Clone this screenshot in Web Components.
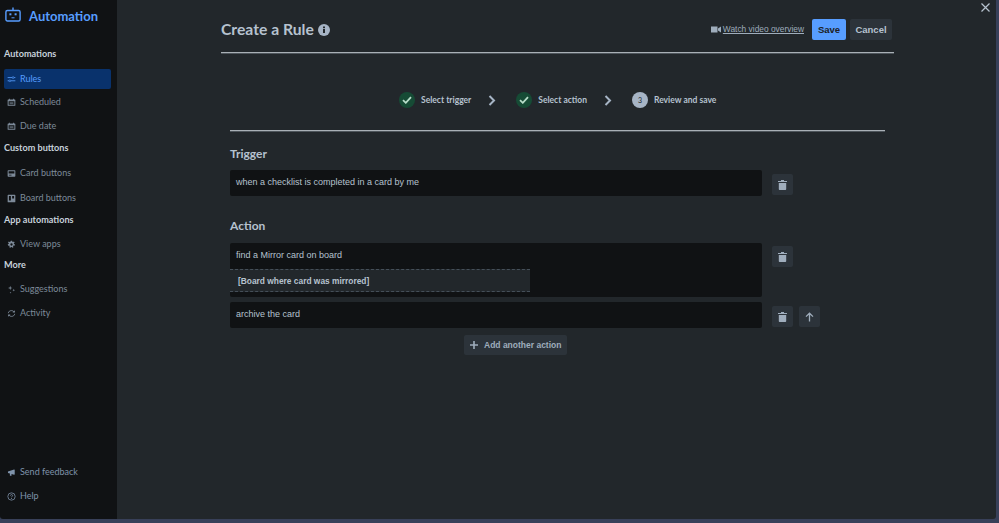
<!DOCTYPE html>
<html lang="en">
<head>
<meta charset="utf-8">
<title>Automation</title>
<style>
  html, body { margin: 0; height: 100%; background: #384059; overflow: hidden; }
</style>
</head>
<body>
<automation-app></automation-app>
<script>
const icons = {
  rules: '<path d="M1 4h7M11 4h2M1 9h2M6 9h7" stroke="currentColor" stroke-width="1.3" fill="none"/><circle cx="9.5" cy="4" r="1.4" fill="none" stroke="currentColor"/><circle cx="4.5" cy="9" r="1.4" fill="none" stroke="currentColor"/>',
  calendar: '<path fill="currentColor" fill-rule="evenodd" d="M3 1h1.500v1.200h5V1H11v1.200h1.200c.5 0 .8.400.8.800v8.200c0 .5-.3.8-.8.8H1.800c-.5 0-.8-.3-.8-.8V3c0-.4.300-.8.800-.8H3zM2.500 5v5.500h9V5z"/><path fill="currentColor" opacity=".6" d="M4 6.500h6v3H4z"/>',
  card: '<path fill="currentColor" fill-rule="evenodd" d="M2 2h10c.6 0 1 .4 1 1v8c0 .6-.4 1-1 1H2c-.6 0-1-.4-1-1V3c0-.6.4-1 1-1zm.5 1.500v3.500h9V3.500zM3 9v1h4V9z"/>',
  board: '<path fill="currentColor" fill-rule="evenodd" d="M2 1h10c.6 0 1 .4 1 1v10c0 .6-.4 1-1 1H2c-.6 0-1-.4-1-1V2c0-.6.4-1 1-1zm1 2v7h3V3zm5 0v4h3V3z"/>',
  gear: '<path fill="currentColor" fill-rule="evenodd" d="M6 1h2l.3 1.600 1.100.5L10.800 2.200l1.100 1.700-1.200 1 .1 1.200 1.500.7-.5 2-1.700-.1-.7 1 .6 1.500-1.800 1-1-1.300H6.300l-1 1.300-1.800-1 .6-1.500-.7-1-1.700.1-.5-2 1.500-.7.1-1.200-1.200-1 1.100-1.700 1.400.9 1.100-.5zM7 5.200a1.800 1.800 0 1 0 0 3.600 1.800 1.800 0 0 0 0-3.600z"/>',
  sparkle: '<path fill="currentColor" d="M5 1l.8 2.700L8.500 4.500 5.800 5.300 5 8 4.200 5.300 1.500 4.500l2.700-.8zM10.500 6l.5 1.500 1.500.5-1.500.5-.5 1.500-.5-1.500L8.500 8l1.500-.5zM5.500 10.500l.4 1 1 .4-1 .4-.4 1-.4-1-1-.4 1-.4z"/>',
  activity: '<path fill="none" stroke="currentColor" stroke-width="1.400" d="M2 6.500C2.300 4 4.300 2.500 7 2.500c1.500 0 2.800.6 3.800 1.800M12 7.500c-.3 2.500-2.300 4-5 4-1.500 0-2.800-.6-3.800-1.800"/><path fill="currentColor" d="M12.300 1.800v3.700H8.600zM1.700 12.200V8.500h3.700z"/>',
  feedback: '<path fill="currentColor" d="M1.500 5.500 11 2.500c.6-.2 1 .2 1 .7v6.600c0 .5-.4.9-1 .7L7 9.300V12H4.500V8.500l-3-.8z"/>',
  help: '<circle cx="7" cy="7" r="5.700" fill="none" stroke="currentColor" stroke-width="1.200"/><path d="M5.300 5.600C5.400 4.600 6.100 4 7 4c1 0 1.700.6 1.700 1.500 0 1.300-1.700 1.300-1.700 2.700" fill="none" stroke="currentColor" stroke-width="1.200"/><circle cx="7" cy="10" r=".8" fill="currentColor"/>'
}

class NavItem extends HTMLElement {
  constructor() {
    super()
    this.attachShadow({ mode: 'open' })
    this.shadowRoot.innerHTML = `
      <style>
        :host {
          display: flex;
          align-items: center;
          gap: 4px;
          height: 20px;
          margin-left: 4px;
          width: 107px;
          padding-left: 3px;
          box-sizing: border-box;
          color: #7d8a99;
          font: 400 9px/20px Lato, sans-serif;
          border-radius: 2px;
        }
        :host([active]) { background: #09326c; color: #579dff; }
        :host([tint]) { color: #7f93ab; }
        svg { width: 9px; height: 9px; flex: none; }
      </style>
      <svg viewBox="0 0 14 14"></svg><slot></slot>
    `
  }

  connectedCallback() {
    this.shadowRoot.querySelector('svg').innerHTML = icons[this.getAttribute('icon')] || ''
  }
}
customElements.define('nav-item', NavItem)

class NavSidebar extends HTMLElement {
  constructor() {
    super()
    this.attachShadow({ mode: 'open' })
    this.shadowRoot.innerHTML = `
      <style>
        :host {
          display: flex;
          flex-direction: column;
          width: 117px;
          flex: none;
          background: #101214;
          border-bottom-left-radius: 3px;
        }
        .brand {
          display: flex;
          align-items: center;
          gap: 8px;
          height: 32px;
          padding-left: 5px;
          color: #579dff;
          font: 700 13px/32px Lato, sans-serif;
        }
        .brand svg { width: 16px; height: 15px; margin-top: -3px; }
        h3 {
          margin: 0;
          padding-left: 4px;
          color: #c7d1db;
          font: 700 9.100px/14px Lato, sans-serif;
        }
        .foot { margin-top: auto; padding-bottom: 13px; }
      </style>
      <div class="brand">
        <svg viewBox="0 0 16 15"><rect x=".9" y="3.500" width="14.200" height="10.500" rx="1.500" fill="none" stroke="currentColor" stroke-width="1.400"/><path stroke="currentColor" stroke-width="1.400" d="M8 .5v3"/><rect x="4.400" y="6.300" width="2" height="2" fill="currentColor"/><rect x="9.600" y="6.300" width="2" height="2" fill="currentColor"/><path stroke="currentColor" d="M6.500 10.800h3"/></svg>
        Automation
      </div>
      <h3 style="margin-top:15px">Automations</h3>
      <nav-item icon="rules" active style="margin-top:8px">Rules</nav-item>
      <nav-item icon="calendar" style="margin-top:3px">Scheduled</nav-item>
      <nav-item icon="calendar" style="margin-top:4px">Due date</nav-item>
      <h3 style="margin-top:5px">Custom buttons</h3>
      <nav-item icon="card" style="margin-top:8px">Card buttons</nav-item>
      <nav-item icon="board" style="margin-top:5px">Board buttons</nav-item>
      <h3 style="margin-top:5px">App automations</h3>
      <nav-item icon="gear" style="margin-top:7px">View apps</nav-item>
      <h3 style="margin-top:4px">More</h3>
      <nav-item icon="sparkle" style="margin-top:7px">Suggestions</nav-item>
      <nav-item icon="activity" style="margin-top:4px">Activity</nav-item>
      <div class="foot">
        <nav-item icon="feedback" tint>Send feedback</nav-item>
        <nav-item icon="help" tint style="margin-top:4px">Help</nav-item>
      </div>
    `
  }
}
customElements.define('nav-sidebar', NavSidebar)

class IconButton extends HTMLElement {
  constructor() {
    super()
    this.attachShadow({ mode: 'open' })
    const up = this.getAttribute('kind') === 'up'
    this.shadowRoot.innerHTML = `
      <style>
        :host {
          display: flex;
          align-items: center;
          justify-content: center;
          width: 21px;
          height: 21px;
          flex: none;
          background: #2c333a;
          border-radius: 2px;
          color: #9fadbc;
        }
        svg { width: 9px; height: 10px; }
      </style>
      ${up
        ? '<svg viewBox="0 0 9 10"><path fill="none" stroke="currentColor" stroke-width="1.300" d="M1 4.600 4.500 1.200 8 4.600M4.500 1.500V9.500"/></svg>'
        : '<svg viewBox="0 0 9 10"><path fill="currentColor" d="M3 0h3v1h3v1H0V1h3zM.8 3h7.400v6c0 .6-.4 1-1 1H1.800c-.6 0-1-.4-1-1z"/></svg>'}
    `
  }
}
customElements.define('icon-button', IconButton)

class RuleRow extends HTMLElement {
  constructor() {
    super()
    this.attachShadow({ mode: 'open' })
    this.shadowRoot.innerHTML = `
      <style>
        :host {
          display: flex;
          align-items: flex-start;
          gap: 10px;
        }
        .box {
          width: 532px;
          flex: none;
          box-sizing: border-box;
          background: #101214;
          border-radius: 2px;
          color: #b6c2cf;
          font: 400 9px/25px "Liberation Sans", Arial, sans-serif;
          padding-left: 6px;
          min-height: 26px;
        }
        .tools { display: flex; gap: 6px; margin-top: var(--tools-top, 4px); }
      </style>
      <div class="box"><slot></slot></div>
      <div class="tools"><slot name="tools"></slot></div>
    `
  }
}
customElements.define('rule-row', RuleRow)

class StepItem extends HTMLElement {
  constructor() {
    super()
    this.attachShadow({ mode: 'open' })
    const n = this.getAttribute('number')
    this.shadowRoot.innerHTML = `
      <style>
        :host {
          display: flex;
          align-items: center;
          gap: 6px;
          color: #b6c2cf;
          font: 700 8.500px/16px Lato, sans-serif;
        }
        .dot {
          width: 16px;
          height: 16px;
          border-radius: 50%;
          background: ${n ? '#a6b4c5' : '#164b35'};
          color: #22272b;
          display: flex;
          align-items: center;
          justify-content: center;
          font: 400 7px/16px Lato, sans-serif;
        }
        svg { width: 10px; height: 8px; }
      </style>
      <span class="dot">${n || '<svg viewBox="0 0 10 8"><path fill="none" stroke="#b6dcc8" stroke-width="1.800" d="M1 4.200 3.800 6.800 9 1.200"/></svg>'}</span>
      <slot></slot>
    `
  }
}
customElements.define('step-item', StepItem)

class StepChevron extends HTMLElement {
  constructor() {
    super()
    this.attachShadow({ mode: 'open' })
    this.shadowRoot.innerHTML = `
      <style>
        :host { display: flex; color: #a6b4c5; }
        svg { width: 8px; height: 11px; }
      </style>
      <svg viewBox="0 0 8 11"><path fill="none" stroke="currentColor" stroke-width="2" d="M1.500 1 6 5.500 1.500 10"/></svg>
    `
  }
}
customElements.define('step-chevron', StepChevron)

class RuleEditor extends HTMLElement {
  constructor() {
    super()
    this.attachShadow({ mode: 'open' })
    this.shadowRoot.innerHTML = `
      <style>
        :host {
          display: flex;
          flex-direction: column;
          flex: 1;
          min-width: 0;
          position: relative;
          background: #22272b;
          border-bottom-right-radius: 3px;
          padding: 0 104px;
          font-family: Lato, sans-serif;
        }
        .head {
          display: flex;
          align-items: center;
          height: 46px;
          padding-top: 6px;
          border-bottom: 1px solid #a9b0b6;
          box-shadow: 0 1px 0 #4e555b;
          margin-bottom: 1px;
          width: 673px;
        }
        h1 {
          margin: 0;
          color: #b6c2cf;
          font: 700 15.700px/20px Lato, sans-serif;
          display: flex;
          align-items: center;
          gap: 4px;
        }
        h1 svg { width: 12px; height: 12px; margin-top: 1px; }
        .right {
          margin-left: auto;
          display: flex;
          align-items: center;
          font: 400 8.400px/20px "Liberation Sans", Arial, sans-serif;
          color: #9fadbc;
          padding-right: 2px;
        }
        .right svg { width: 10px; height: 7px; margin-right: 2px; }
        .right u { margin-right: 8px; }
        .btn {
          height: 21px;
          box-sizing: border-box;
          border-radius: 2px;
          font: 700 9.500px/21px "Liberation Sans", Arial, sans-serif;
          text-align: center;
        }
        .save { width: 34px; background: #579dff; color: #1d2125; margin-right: 4px; }
        .cancel { width: 42px; background: #2c333a; color: #b6c2cf; }
        .steps {
          display: flex;
          align-items: center;
          margin-left: 9px;
          margin-bottom: 1px;
          width: 655px;
          padding: 38px 0 22px 169px;
          box-sizing: border-box;
          border-bottom: 1px solid #a9b0b6;
          box-shadow: 0 1px 0 #4e555b;
        }
        step-chevron { margin: 0 20px 0 17px; }
        .body { margin-left: 9px; }
        h2 {
          margin: 0;
          color: #b6c2cf;
          font: 700 12px/16px Lato, sans-serif;
        }
        .sub {
          display: block;
          width: 300px;
          height: 23px;
          margin: 1px 0 5px -6px;
          padding-left: 8px;
          box-sizing: border-box;
          background: #22272b;
          border-top: 1px dashed #454f59;
          border-bottom: 1px dashed #454f59;
          color: #b6c2cf;
          font: 700 8.400px/22px "Liberation Sans", Arial, sans-serif;
        }
        .add {
          display: flex;
          align-items: center;
          gap: 6px;
          width: 103px;
          height: 20px;
          box-sizing: border-box;
          margin: 7px 0 0 234px;
          padding-left: 6px;
          background: #2c333a;
          border-radius: 2px;
          color: #9fadbc;
          font: 700 8.500px/20px "Liberation Sans", Arial, sans-serif;
          white-space: nowrap;
        }
        .add svg { width: 8px; height: 8px; flex: none; }
        .close {
          position: absolute;
          top: 3px;
          right: 6px;
          width: 9px;
          height: 9px;
          color: #b6c2cf;
        }
      </style>
      <div class="head">
        <h1>Create a Rule
          <svg viewBox="0 0 12 12"><circle cx="6" cy="6" r="6" fill="#a6b4c5"/><rect x="5" y="5" width="2" height="4" fill="#22272b"/><rect x="5" y="2.500" width="2" height="1.700" fill="#22272b"/></svg>
        </h1>
        <div class="right">
          <svg viewBox="0 0 10 7"><path fill="currentColor" d="M0 .5h6.500v6H0zM7 2.500 10 .5v6L7 4.500z"/></svg>
          <u>Watch video overview</u>
          <div class="btn save">Save</div>
          <div class="btn cancel">Cancel</div>
        </div>
      </div>
      <div class="steps">
        <step-item>Select trigger</step-item>
        <step-chevron></step-chevron>
        <step-item>Select action</step-item>
        <step-chevron></step-chevron>
        <step-item number="3">Review and save</step-item>
      </div>
      <div class="body">
        <h2 style="margin-top:14px">Trigger</h2>
        <rule-row style="margin-top:8px">
          when a checklist is completed in a card by me
          <icon-button slot="tools"></icon-button>
        </rule-row>
        <h2 style="margin-top:22px">Action</h2>
        <rule-row style="margin-top:9px;--tools-top:3px">
          find a Mirror card on board
          <span class="sub">[Board where card was mirrored]</span>
          <icon-button slot="tools"></icon-button>
        </rule-row>
        <rule-row style="margin-top:5px">
          archive the card
          <icon-button slot="tools"></icon-button>
          <icon-button slot="tools" kind="up"></icon-button>
        </rule-row>
        <div class="add">
          <svg viewBox="0 0 8 8"><path stroke="currentColor" stroke-width="1.600" d="M4 0v8M0 4h8"/></svg>
          <span>Add another action</span>
        </div>
      </div>
      <svg class="close" viewBox="0 0 9 9"><path stroke="currentColor" stroke-width="1.200" d="M.5.500l8 8M8.500.500l-8 8"/></svg>
    `
  }
}
customElements.define('rule-editor', RuleEditor)

class AutomationApp extends HTMLElement {
  constructor() {
    super()
    this.attachShadow({ mode: 'open' })
    this.shadowRoot.innerHTML = `
      <style>
        :host {
          display: flex;
          width: 996px;
          height: 519px;
        }
      </style>
      <nav-sidebar></nav-sidebar>
      <rule-editor></rule-editor>
    `
  }
}
customElements.define('automation-app', AutomationApp)
</script>
</body>
</html>
